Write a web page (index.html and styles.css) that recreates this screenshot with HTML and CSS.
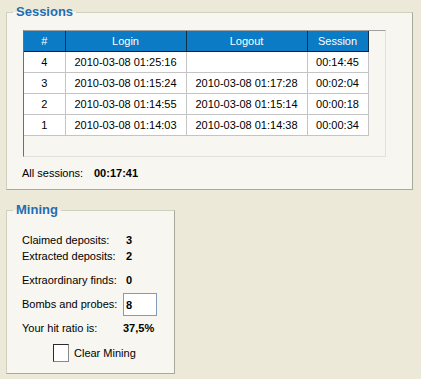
FILE: index.html
```
<!DOCTYPE html>
<html lang="en">
<head>
  <meta charset="UTF-8">
  <title>Sessions</title>
  <link rel="stylesheet" href="styles.css">
</head>
<body>
  <fieldset class="group sessions">
    <legend class="group-title">Sessions</legend>
    <div class="list-box">
      <table class="session-table">
        <thead>
          <tr><th class="col-num">#</th><th class="col-time">Login</th><th class="col-time">Logout</th><th class="col-dur">Session</th></tr>
        </thead>
        <tbody>
          <tr><td>4</td><td>2010-03-08 01:25:16</td><td></td><td>00:14:45</td></tr>
          <tr><td>3</td><td>2010-03-08 01:15:24</td><td>2010-03-08 01:17:28</td><td>00:02:04</td></tr>
          <tr><td>2</td><td>2010-03-08 01:14:55</td><td>2010-03-08 01:15:14</td><td>00:00:18</td></tr>
          <tr><td>1</td><td>2010-03-08 01:14:03</td><td>2010-03-08 01:14:38</td><td>00:00:34</td></tr>
        </tbody>
      </table>
    </div>
    <div class="total">
      <span class="total-label">All sessions:</span>
      <b>00:17:41</b>
    </div>
  </fieldset>

  <fieldset class="group mining">
    <legend class="group-title">Mining</legend>
    <div class="stats">
      <span class="label">Claimed deposits:</span><b class="value">3</b>
      <span class="label">Extracted deposits:</span><b class="value">2</b>
      <span class="label gap">Extraordinary finds:</span><b class="value gap">0</b>
      <span class="label gap">Bombs and probes:</span><span class="input-wrap gap"><input class="field" type="text" value="8"></span>
      <span class="label gap">Your hit ratio is:</span><b class="value ratio gap">37,5%</b>
    </div>
    <label class="check">
      <span class="box"></span>
      <span>Clear Mining</span>
    </label>
  </fieldset>
</body>
</html>
```
FILE: styles.css
```
* {
  box-sizing: border-box;
}
body {
  margin: 0;
  padding: 4px 0 0 6px;
  background: #ece9d8;
  font-family: 'Liberation Sans', Arial, sans-serif;
  font-size: 11px;
  color: #000;
}
.group {
  margin: 0;
  border: 1px solid #d0d0bf;
  border-right-color: #a9a99c;
  border-bottom-color: #a9a99c;
  background: #f7f6f1;
  padding: 0 0 0 16px;
}
.group-title {
  margin-left: -10px;
  padding: 0 3px;
  font-size: 13px;
  line-height: 16px;
  font-weight: bold;
  color: #1f6db3;
}
.sessions {
  width: 407px;
  height: 186px;
  padding-top: 10px;
}
.list-box {
  width: 363px;
  height: 127px;
  border: 1px solid #e2e1d8;
  border-top-color: #a0a0a0;
  border-left-color: #6f6f6f;
}
.session-table {
  border-collapse: collapse;
  table-layout: fixed;
  width: 344px;
}
.session-table th {
  height: 20px;
  padding: 0;
  background: #0a7bc4;
  color: #fff;
  font-weight: normal;
  border-right: 1px solid #10304a;
  border-bottom: 1px solid #1a1a1a;
}
.col-num { width: 41px; }
.col-time { width: 121px; }
.col-dur { width: 61px; }
.session-table td {
  height: 21px;
  padding: 0;
  background: #fff;
  text-align: center;
  border: 1px solid #c4c4c4;
  border-top: none;
}
.session-table td:first-child {
  border-left: none;
}
.total {
  display: flex;
  margin: 9px 0 0 -1px;
  line-height: 14px;
}
.total-label {
  width: 72px;
}
.mining {
  width: 169px;
  height: 172px;
  margin-top: 12px;
}
.stats {
  display: grid;
  grid-template-columns: 101px auto;
  align-items: center;
  margin-top: 14px;
  margin-left: -1px;
  line-height: 16px;
}
.value {
  padding-left: 3px;
}
.ratio {
  padding-left: 0;
}
.gap {
  margin-top: 8px;
}
.ratio.gap,
.label.last {
  margin-top: 8px;
}
.input-wrap {
  display: block;
  height: 16px;
  position: relative;
}
.field {
  position: absolute;
  left: 0;
  top: -3px;
  width: 34px;
  height: 23px;
  border: 1px solid #7f9db9;
  background: #fff;
  padding: 0 0 0 2px;
  font: bold 11px 'Liberation Sans', Arial, sans-serif;
}
.check {
  display: flex;
  align-items: center;
  gap: 5px;
  margin: 8px 0 0 30px;
}
.box {
  width: 16px;
  height: 18px;
  border: 1px solid #2b2b2b;
  border-right-color: #8a8a8a;
  border-bottom-color: #8a8a8a;
  background: #fff;
}
```
